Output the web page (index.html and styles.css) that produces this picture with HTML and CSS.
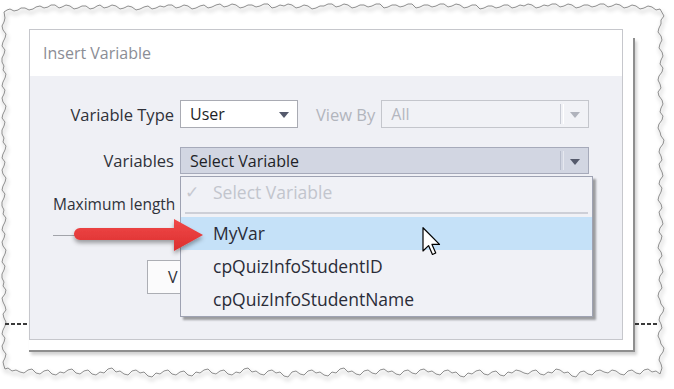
FILE: index.html
```html
<!DOCTYPE html>
<html lang="en">
<head>
<meta charset="UTF-8">
<title>Insert Variable</title>
<link rel="stylesheet" href="styles.css">
</head>
<body>

<div class="sheet">
<svg class="torn" width="674" height="389" viewBox="0 0 674 389">
<defs>
<filter id="edgeShadow" x="-5%" y="-5%" width="110%" height="115%">
<feDropShadow dx="1" dy="3" stdDeviation="2" flood-color="#000" flood-opacity="0.4"/>
</filter>
</defs>
<polygon filter="url(#edgeShadow)" fill="none" stroke="#8c8c8c" stroke-width="1" points="4,12 7,10 10,9 14,11 18,10 21,8 25,8 29,10 33,9 36,7 40,6 44,8 48,7 51,5 55,5 59,8 62,7 66,5 70,6 74,9 78,8 82,6 86,6 90,9 94,8 97,6 100,5 104,8 108,7 112,5 116,6 120,9 124,8 128,6 132,7 136,10 140,9 144,7 148,6 152,9 156,8 160,6 164,7 168,5 172,5 176,8 180,7 184,5 188,6 192,9 196,8 200,6 204,5 208,8 212,7 216,5 220,4 224,7 228,6 232,4 236,5 240,8 244,7 248,5 252,5 256,7 260,6 264,4 268,4 272,8 276,7 280,5 284,6 288,4 292,5 296,8 300,7 304,5 308,6 312,9 316,8 320,6 324,6 328,4 332,4 336,7 340,6 344,4 348,5 352,8 356,7 360,5 364,5 368,7 372,6 376,4 380,4 384,8 388,7 392,5 396,5 400,7 404,6 408,4 412,4 416,8 420,7 424,5 428,5 432,7 436,6 440,4 444,4 448,7 452,6 456,4 460,5 464,8 468,7 472,5 476,5 480,9 484,8 488,6 492,6 496,8 500,7 504,5 508,5 512,8 516,7 520,5 524,6 528,4 532,5 536,8 540,7 544,5 548,6 552,4 556,4 560,7 564,6 568,4 572,5 576,8 580,7 584,5 588,5 592,7 596,6 600,4 604,4 608,7 612,6 616,4 620,5 624,8 628,7 632,5 636,6 640,9 644,8 648,6 652,7 656,10 660,9 664,16 661,20 661,24 659,28 658,32 661,36 662,40 660,44 659,48 662,52 663,56 661,60 660,64 663,68 662,72 659,76 658,80 660,84 661,88 658,92 659,96 662,100 663,104 661,108 660,112 663,116 662,120 659,124 658,128 660,132 661,136 664,140 663,144 660,148 659,152 661,156 662,160 659,164 660,168 662,172 663,176 660,180 659,184 662,188 661,192 659,196 658,200 661,204 662,208 659,212 660,216 662,220 663,224 660,228 659,232 662,236 661,240 659,244 658,248 661,252 662,256 659,260 660,264 662,268 663,272 660,276 659,280 661,284 662,288 659,292 658,296 660,300 661,304 664,308 663,312 660,316 659,320 661,324 662,328 659,332 658,336 660,340 661,344 664,348 663,352 660,356 659,360 661,364 662,368 660,374 656,371 652,372 648,369 644,370 640,374 636,373 632,370 628,371 624,375 620,374 616,371 612,370 608,373 604,372 600,370 596,371 592,375 588,374 584,371 580,372 576,377 572,376 568,372 564,373 560,370 556,369 552,373 548,372 544,375 540,374 536,370 532,371 528,374 524,373 520,371 516,370 512,373 508,372 504,376 500,375 496,371 492,372 488,375 484,374 480,370 476,371 472,374 468,373 464,377 460,376 456,372 452,373 448,370 444,371 440,375 436,374 432,371 428,372 424,369 420,370 416,374 412,373 408,370 404,371 400,375 396,374 392,371 388,372 384,369 380,370 376,374 372,373 368,370 364,371 360,375 356,374 352,371 348,372 344,368 340,369 336,373 332,372 328,376 324,375 320,372 316,373 312,370 308,371 304,375 300,374 296,371 292,372 288,377 284,376 280,372 276,373 272,370 268,371 264,375 260,374 256,371 252,372 248,368 244,369 240,373 236,372 232,375 228,374 224,370 220,371 216,374 212,373 208,369 204,370 200,373 196,372 192,376 188,375 184,371 180,372 176,375 172,374 168,370 164,371 160,374 156,373 152,377 148,376 144,372 140,373 136,370 132,371 128,375 124,374 120,371 116,372 112,368 108,369 104,373 100,372 96,375 92,374 88,370 84,371 80,374 76,373 72,369 68,370 64,373 60,372 56,375 52,374 48,370 44,371 40,374 36,373 32,369 28,370 24,373 20,372 16,370 12,371 8,368 5,369 4,366 3,362 5,358 6,354 3,350 2,346 4,342 5,338 2,334 3,330 5,326 6,322 4,318 3,314 6,310 5,306 3,302 2,298 5,294 6,290 3,286 4,282 2,278 2,274 4,270 5,266 2,262 3,258 5,254 6,250 3,246 2,242 4,238 5,234 2,230 3,226 5,222 6,218 3,214 4,210 2,206 2,202 4,198 5,194 2,190 3,186 5,182 6,178 3,174 2,170 4,166 5,162 2,158 3,154 5,150 6,146 3,142 4,138 2,134 2,130 4,126 5,122 2,118 3,114 5,110 6,106 3,102 2,98 4,94 5,90 2,86 3,82 5,78 6,74 3,70 4,66 2,62 2,58 4,54 5,50 2,46 3,42 5,38 6,34 3,30 2,26 4,22 5,18"/>
</svg>

<div class="dash-line"></div>
<div class="back-window"></div>

<div class="dialog">
<div class="dlg-title">Insert Variable</div>
<div class="dlg-body">
<div class="form-row">
<label class="field-label">Variable Type</label>
<div class="select select-type">
<span>User</span>
<span class="caret"></span>
</div>
<label class="field-label muted">View By</label>
<div class="select select-view disabled">
<span>All</span>
<span class="split"></span>
<span class="caret"></span>
</div>
</div>
<div class="form-row">
<label class="field-label">Variables</label>
<div class="select select-var">
<span>Select Variable</span>
<span class="split"></span>
<span class="caret"></span>
</div>
</div>
<div class="max-length">Maximum length</div>
<div class="slider"></div>
<button class="action-btn">V</button>

<ul class="menu">
<li class="menu-item disabled"><span class="check">&#10003;</span>Select Variable</li>
<li class="menu-sep"></li>
<li class="menu-item hover">MyVar</li>
<li class="menu-item">cpQuizInfoStudentID</li>
<li class="menu-item">cpQuizInfoStudentName</li>
</ul>
</div>
</div>

<svg class="red-arrow" width="140" height="44" viewBox="0 0 140 44">
<defs>
<filter id="arrowShadow" x="-10%" y="-20%" width="120%" height="160%">
<feDropShadow dx="0" dy="3" stdDeviation="2" flood-color="#000" flood-opacity="0.35"/>
</filter>
<linearGradient id="arrowFill" x1="0" y1="0" x2="0" y2="1">
<stop offset="0" stop-color="#f04848"/>
<stop offset="1" stop-color="#dc2f2f"/>
</linearGradient>
</defs>
<path filter="url(#arrowShadow)" fill="url(#arrowFill)" d="M10,10 L104,10 L104,1 L133,17 L104,33 L104,22 L10,22 A6,6 0 0 1 10,10 Z"/>
</svg>

<svg class="cursor" width="20" height="30" viewBox="0 0 13 20">
<path d="M0.5,0.5 L0.5,16 L4.2,12.4 L6.8,18.3 L9,17.3 L6.5,11.6 L11.5,11.6 Z" fill="#fff" stroke="#000" stroke-width="0.8" stroke-linejoin="round"/>
</svg>
</div>

</body>
</html>
```

FILE: styles.css
```css
body {
margin: 0;
background: #fff;
font-family: 'Open Sans', 'Liberation Sans', sans-serif;
}

.sheet {
position: relative;
width: 674px;
height: 389px;
padding: 29px 0 0 29px;
box-sizing: border-box;
overflow: hidden;
}

.torn {
position: absolute;
left: 0;
top: 0;
}

.dash-line {
position: absolute;
left: 5px;
top: 323px;
width: 653px;
height: 2px;
background: repeating-linear-gradient(90deg, #3a3a3a 0 4px, transparent 4px 6px);
}

.back-window {
position: absolute;
left: 29px;
top: 38px;
width: 604px;
height: 312px;
background: #fff;
border-right: 2px solid #8e8e8e;
border-bottom: 2px solid #8e8e8e;
box-shadow: 2px 3px 3px rgba(0, 0, 0, 0.18);
}

.dialog {
position: relative;
width: 594px;
height: 311px;
box-sizing: border-box;
border: 1px solid #c6c7cc;
background: #eff0f5;
display: flex;
flex-direction: column;
}

.dlg-title {
height: 46px;
background: #fff;
color: #8b8d95;
font-size: 16px;
line-height: 46px;
padding-left: 13px;
}

.dlg-body {
position: relative;
flex: 1;
padding-top: 24px;
}

.form-row {
display: flex;
align-items: center;
margin-bottom: 19px;
padding-right: 33px;
}

.field-label {
width: 144px;
flex: none;
text-align: right;
font-size: 16.5px;
color: #30323a;
margin-right: 6px;
}

.field-label.muted {
width: auto;
color: #b2b5bd;
margin-left: 18px;
margin-right: 6px;
}

.select {
position: relative;
box-sizing: border-box;
height: 28px;
border: 1px solid #a9abb3;
background: #fff;
display: flex;
align-items: center;
padding-left: 9px;
font-size: 16px;
color: #1e1f27;
}

.select-type {
width: 118px;
flex: none;
}

.select-view {
flex: 1;
background: #f1f2f6;
border-color: #c4c6cc;
color: #b4b7bf;
}

.select-var {
flex: 1;
height: 27px;
background: #d2d6e2;
border-color: #a6aaba;
}

.caret {
position: absolute;
right: 8px;
top: 11px;
width: 0;
height: 0;
border-left: 5px solid transparent;
border-right: 5px solid transparent;
border-top: 6px solid #555a6c;
}

.select-view .caret {
border-top-color: #b0b3bc;
}

.split {
position: absolute;
right: 24px;
top: 3px;
bottom: 3px;
width: 2px;
border-left: 1px solid #c9ccd5;
border-right: 1px solid #fff;
}

.select-var .split {
border-left-color: #b8bdcc;
border-right-color: #e6e8ef;
}

.max-length {
margin-left: 23px;
margin-top: 3px;
font-size: 15.5px;
color: #30323a;
line-height: 22px;
}

.slider {
margin: 20px 0 0 23px;
width: 140px;
height: 1px;
background: #a2a4aa;
}

.action-btn {
margin: 24px 0 0 117px;
width: 70px;
height: 34px;
border: 1px solid #acaeb4;
background: #fbfbfc;
font-family: inherit;
font-size: 16px;
color: #30323a;
text-align: left;
padding-left: 20px;
display: block;
}

.menu {
position: absolute;
left: 150px;
top: 100px;
width: 413px;
margin: 0;
padding: 0;
list-style: none;
box-sizing: border-box;
border: 1px solid #9ea2b2;
background: #f0f1f6;
box-shadow: 3px 3px 2px rgba(0, 0, 0, 0.35);
}

.menu-item {
height: 33px;
line-height: 33px;
padding-left: 32px;
font-size: 17.5px;
color: #2a2c38;
position: relative;
}

.menu-item.disabled {
height: 30px;
line-height: 30px;
color: #c2c5cd;
}

.menu-item.hover {
background: #c5e1f8;
}

.check {
position: absolute;
left: 4px;
font-size: 17px;
color: #c6c8d0;
}

.menu-sep {
height: 2px;
margin: 5px 4px 3px 4px;
background: #cdcfd7;
}

.red-arrow {
position: absolute;
left: 70px;
top: 218px;
}

.cursor {
position: absolute;
left: 422px;
top: 227px;
}
```
